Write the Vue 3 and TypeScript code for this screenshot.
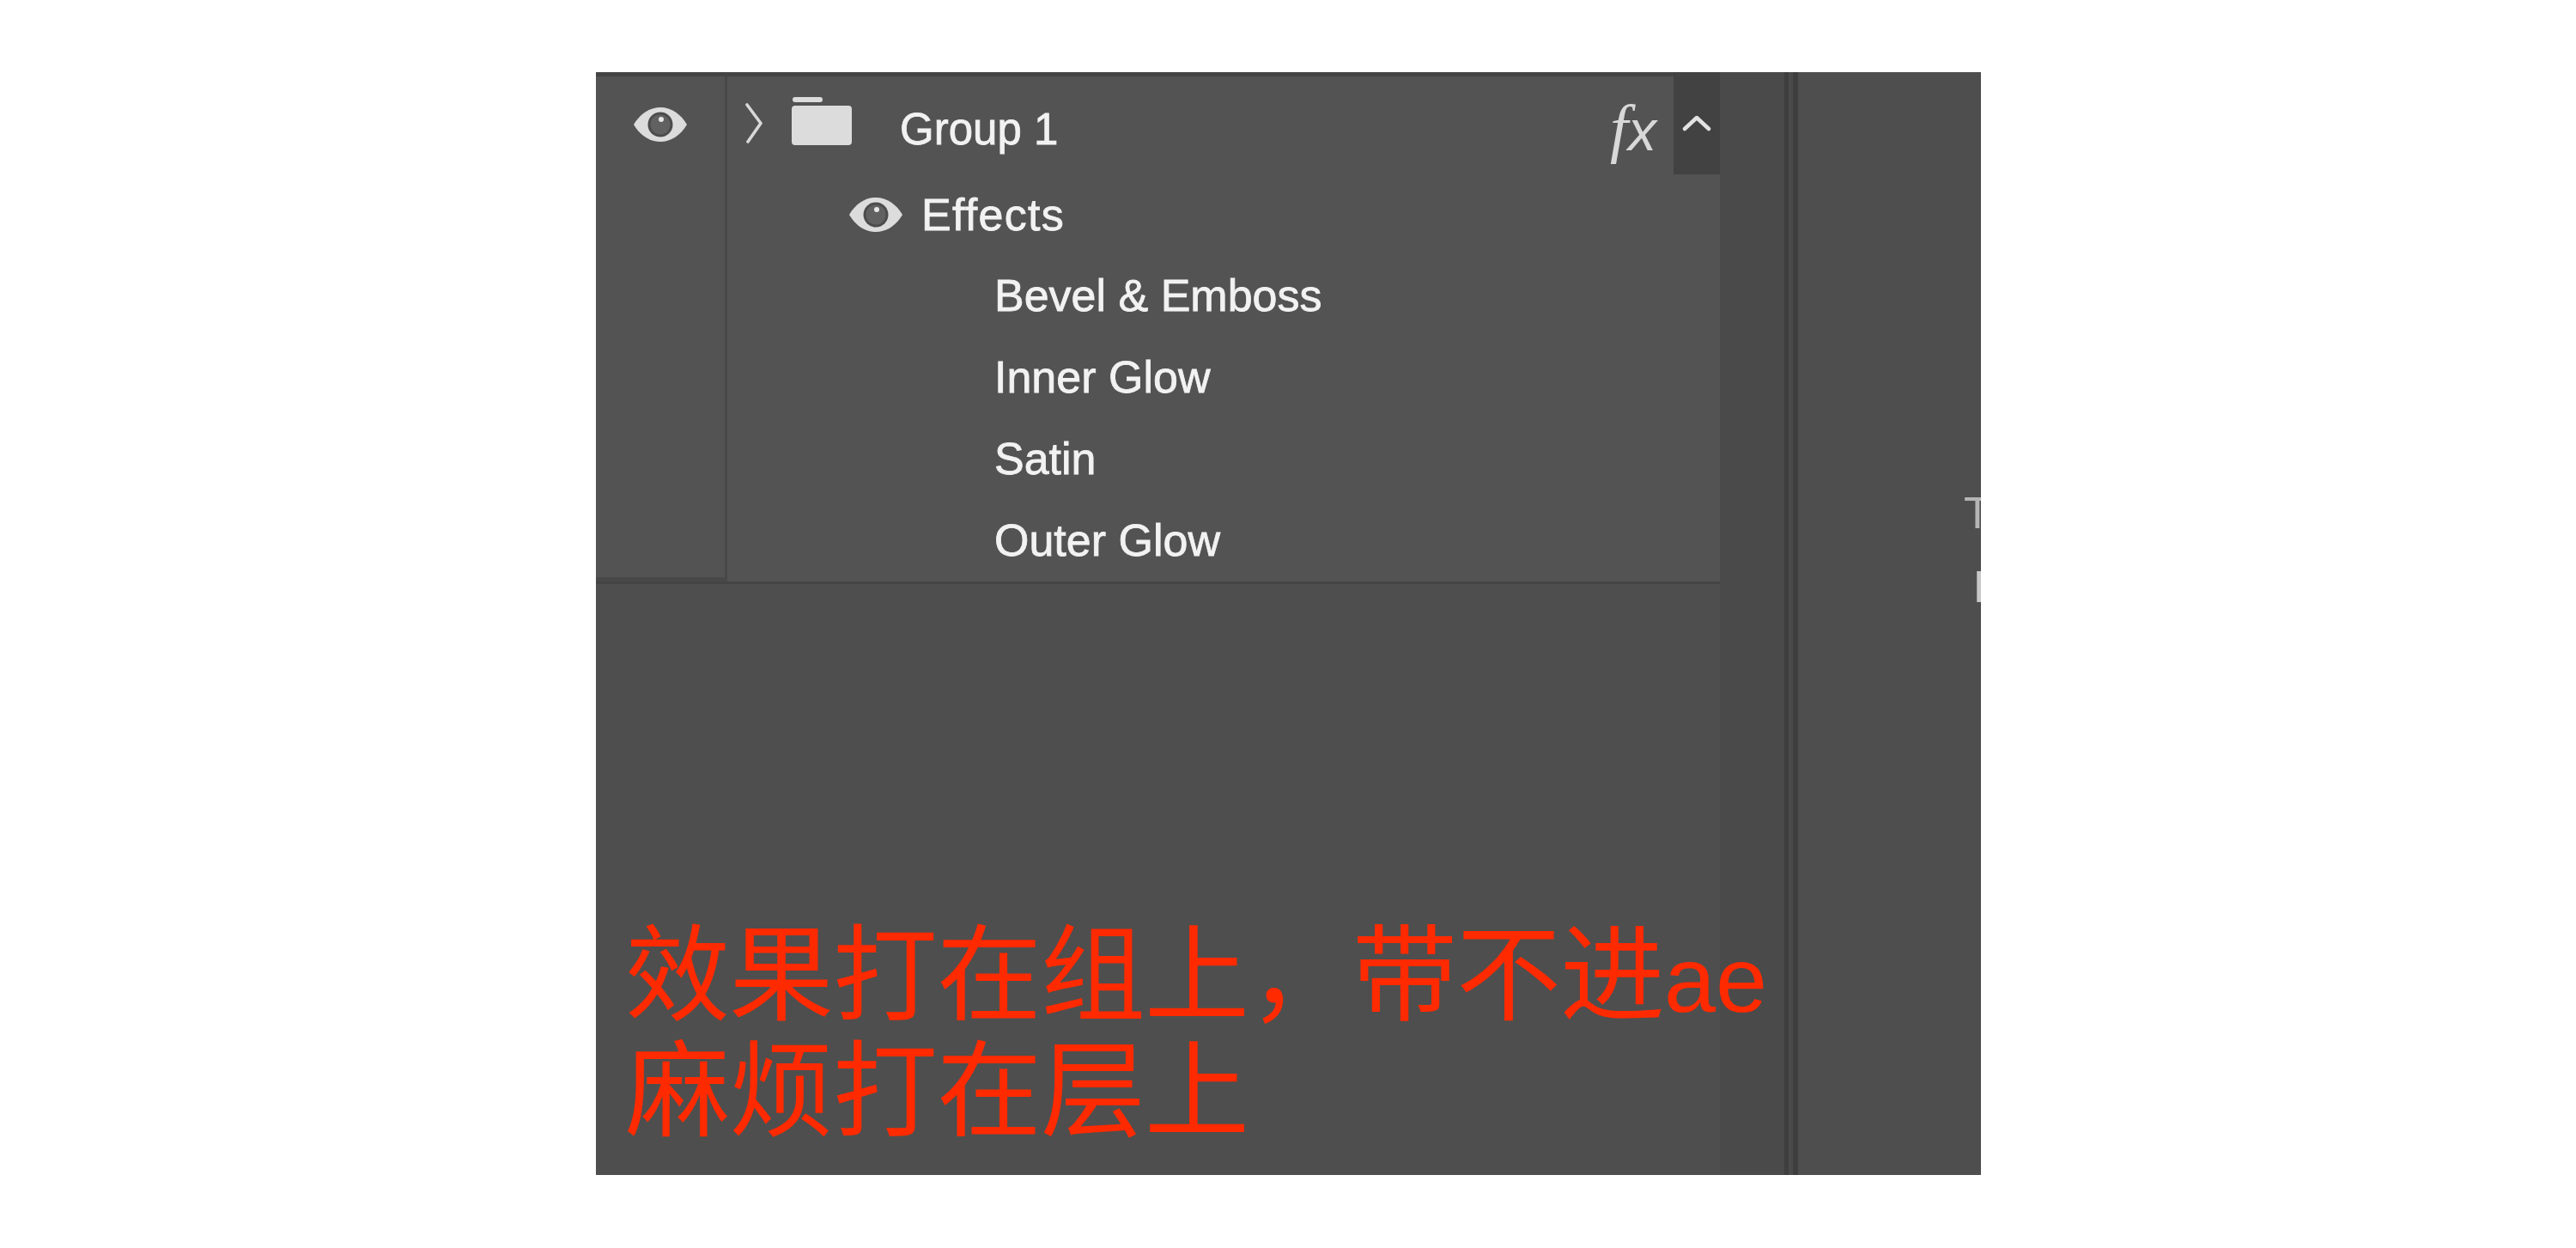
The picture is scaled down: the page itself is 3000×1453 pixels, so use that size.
<script setup lang="ts">
// Effect rows listed below the Effects header
const effects: string[] = ['Bevel & Emboss', 'Inner Glow', 'Satin', 'Outer Glow']
</script>

<template>
  <div class="page">
    <div class="panel">
      <div class="layers-col">
        <div class="layers">
          <div class="eye-col">
            <svg class="eye" viewBox="0 0 64 40">
              <path d="M1 20C8 8 19 0 32 0s24 8 31 20C56 32 45 40 32 40S8 32 1 20Z" fill="#dcdcdc" />
              <circle cx="32" cy="20" r="14.500" fill="#4c4c4c" />
              <circle cx="32" cy="20" r="11.500" fill="#616161" />
              <circle cx="33" cy="14" r="3" fill="#e6e6e6" />
            </svg>
          </div>
          <div class="tree">
            <div class="group-row">
              <svg class="chevron" viewBox="0 0 22 47">
                <path d="M3 2l16 21.500L4 45" fill="none" stroke="#d8d8d8" stroke-width="3.600" stroke-linecap="round" stroke-linejoin="round" />
              </svg>
              <svg class="folder" viewBox="0 0 70 56">
                <rect x="1" y="0" width="35" height="6" rx="3" fill="#dcdcdc" />
                <rect x="0" y="10" width="70" height="46" rx="4" fill="#dcdcdc" />
              </svg>
              <span class="label group-name">Group 1</span>
              <span class="fx"><span class="fx-f">f</span><span class="fx-x">x</span></span>
              <div class="caret-box">
                <svg class="caret" viewBox="0 0 34 20">
                  <path d="M3 17L17 4l14 13" fill="none" stroke="#e2e2e2" stroke-width="4.500" stroke-linecap="round" stroke-linejoin="round" />
                </svg>
              </div>
            </div>
            <div class="row effects-row">
              <svg class="eye" viewBox="0 0 64 40">
                <path d="M1 20C8 8 19 0 32 0s24 8 31 20C56 32 45 40 32 40S8 32 1 20Z" fill="#dcdcdc" />
                <circle cx="32" cy="20" r="14.500" fill="#4c4c4c" />
                <circle cx="32" cy="20" r="11.500" fill="#616161" />
                <circle cx="33" cy="14" r="3" fill="#e6e6e6" />
              </svg>
              <span class="label effects-name">Effects</span>
            </div>
            <div v-for="name in effects" :key="name" class="row effect-row">
              <span class="label">{{ name }}</span>
            </div>
          </div>
        </div>
        <div class="note">
          <p>效果打在组上，带不进<span class="note-latin">ae</span></p>
          <p>麻烦打在层上</p>
        </div>
      </div>
      <div class="splitter"></div>
      <div class="side">
        <span class="side-label side-t">T</span>
        <span class="side-label side-f">F</span>
      </div>
    </div>
  </div>
</template>

<style scoped>
.page {
  width: 3000px;
  height: 1453px;
  padding: 84px 0 85px 694px;
  box-sizing: border-box;
  background: #fff;
  font-family: "Liberation Sans", Arial, sans-serif;
}

.panel {
  width: 1613px;
  height: 1284px;
  display: flex;
  background: #4e4e4e;
  overflow: hidden;
}

.layers-col {
  width: 1384px;
  display: flex;
  flex-direction: column;
  background: linear-gradient(90deg, #4e4e4e 1309px, #4a4a4a 1309px);
}

.layers {
  width: 1309px;
  height: 596px;
  box-sizing: border-box;
  display: flex;
  background: #535353;
  border-top: 5px solid #444;
  border-bottom: 3px solid #444;
}

.eye-col {
  width: 153px;
  flex-shrink: 0;
  box-sizing: border-box;
  display: flex;
  justify-content: center;
  padding-top: 36px;
  border-right: 3px solid #484848;
  border-bottom: 5px solid #484848;
}

.eye {
  width: 64px;
  height: 40px;
  flex-shrink: 0;
}

.tree {
  flex: 1;
  min-width: 0;
}

.group-row {
  height: 114px;
  display: flex;
  align-items: flex-start;
}

.chevron {
  width: 22px;
  height: 47px;
  margin: 31px 0 0 20px;
  flex-shrink: 0;
}

.folder {
  width: 70px;
  height: 56px;
  margin: 24px 0 0 33px;
  flex-shrink: 0;
}

.label {
  font-size: 52px;
  line-height: 95px;
  color: #f2f2f2;
  white-space: nowrap;
  -webkit-text-stroke: 0.8px #f2f2f2;
}

.group-name {
  margin: 14px 0 0 56px;
  font-size: 51px;
}

.fx {
  margin: 20px 20px 0 auto;
  font-style: italic;
  line-height: 80px;
  color: #d8d8d8;
  white-space: nowrap;
}

.fx-f {
  font-family: "Liberation Serif", serif;
  font-size: 76px;
}

.fx-x {
  font-family: "Liberation Sans", Arial, sans-serif;
  font-size: 66px;
}

.caret-box {
  width: 54px;
  height: 119px;
  margin-top: -5px;
  flex-shrink: 0;
  background: #424242;
  display: flex;
  justify-content: center;
  padding-top: 49px;
  box-sizing: border-box;
}

.caret {
  width: 34px;
  height: 20px;
}

.row {
  height: 95px;
  display: flex;
  align-items: center;
}

.effects-row {
  height: 94px;
  padding-left: 141px;
  gap: 21px;
}

.effects-name {
  letter-spacing: 1.300px;
}

.effect-row {
  padding-left: 311px;
}

.note {
  flex: 1;
  padding: 391px 0 0 34px;
  font-family: "Liberation Sans", "Noto Sans CJK SC", sans-serif;
  font-size: 122px;
  line-height: 130px;
  letter-spacing: -1px;
  color: #ff2a00;
  white-space: nowrap;
}

.note p {
  margin: 0;
}

.note-latin {
  font-size: 108px;
  letter-spacing: 0;
}

.splitter {
  width: 16px;
  flex-shrink: 0;
  box-sizing: border-box;
  background: #4a4a4a;
  border-left: 5px solid #3e3e3e;
  border-right: 6px solid #3e3e3e;
}

.side {
  flex: 1;
  min-width: 0;
  padding-top: 470px;
  display: flex;
  flex-direction: column;
  align-items: flex-start;
  overflow: hidden;
}

.side-label {
  font-size: 52px;
  line-height: 86px;
  color: #b5b5b5;
}

.side-t {
  margin-left: 193px;
}

.side-f {
  margin-left: 204px;
  color: #c8c8c8;
}
</style>

<style>
html,
body {
  margin: 0;
  background: #fff;
}
</style>
